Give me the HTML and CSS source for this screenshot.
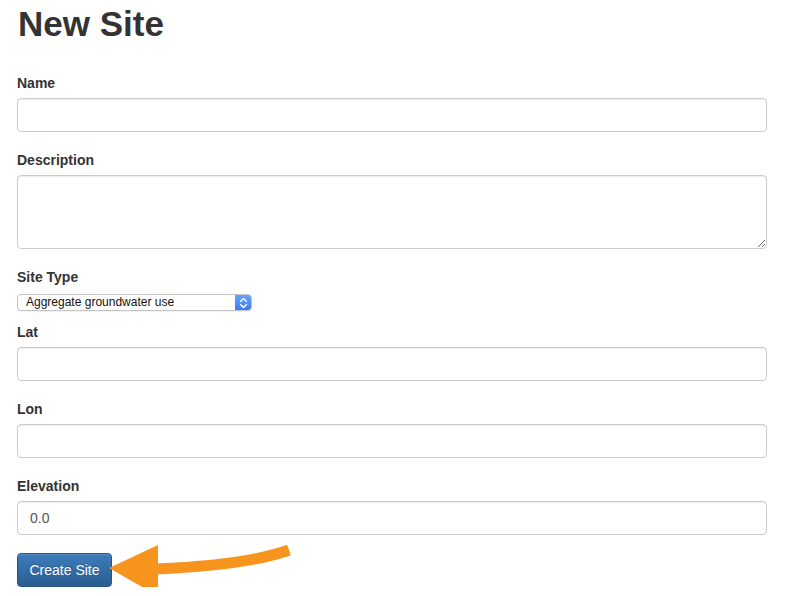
FILE: index.html
```html
<!DOCTYPE html>
<html>
<head>
<meta charset="utf-8">
<link rel="stylesheet" href="styles.css">
</head>
<body>
<div class="page">
  <h1 class="title">New Site</h1>
  <form class="form">
    <div class="group">
      <label class="label">Name</label>
      <input class="control" type="text">
    </div>
    <div class="group">
      <label class="label">Description</label>
      <textarea class="control area"></textarea>
    </div>
    <div class="group group-select">
      <label class="label">Site Type</label>
      <div class="select-box">
        <select class="select"><option>Aggregate groundwater use</option></select>
        <span class="stepper">
          <svg width="9" height="12" viewBox="0 0 9 12"><path d="M1.5 4.5 L4.5 1.5 L7.5 4.5 M1.5 7.5 L4.5 10.5 L7.5 7.5" fill="none" stroke="#fff" stroke-width="1.4" stroke-linecap="round" stroke-linejoin="round"/></svg>
        </span>
      </div>
    </div>
    <div class="group">
      <label class="label">Lat</label>
      <input class="control" type="text">
    </div>
    <div class="group">
      <label class="label">Lon</label>
      <input class="control" type="text">
    </div>
    <div class="group group-last">
      <label class="label">Elevation</label>
      <input class="control" type="text" value="0.0">
    </div>
    <div class="actions">
      <button class="btn" type="button">Create Site</button>
      <svg class="arrow" width="200" height="60" viewBox="0 0 200 60">
        <path d="M50 26 C 95 24, 150 19, 183 7" fill="none" stroke="#f7941e" stroke-width="11" stroke-linecap="butt"/>
        <polygon points="3,25 52,2 52,53" fill="#f7941e"/>
      </svg>
    </div>
  </form>
</div>
</body>
</html>
```
FILE: styles.css
```css
html, body {
  margin: 0;
  padding: 0;
  background: #fff;
}
.page {
  padding: 0 17px;
  width: 750px;
  font-family: "Liberation Sans", Arial, sans-serif;
  font-size: 14px;
  line-height: 20px;
  color: #333;
}
.title {
  font-size: 35px;
  font-weight: bold;
  line-height: 40px;
  margin: 4px 0 0 1px;
  color: #333;
}
.form {
  margin: 29px 0 0 0;
}
.group {
  display: flex;
  flex-direction: column;
  margin-bottom: 18px;
}
.group-select {
  margin-bottom: 11px;
}
.group-last {
  margin-bottom: 18px;
}
.label {
  font-weight: bold;
  font-size: 14px;
  line-height: 20px;
  margin-bottom: 5px;
  color: #333;
}
.control {
  box-sizing: border-box;
  width: 750px;
  height: 34px;
  padding: 6px 12px;
  border: 1px solid #ccc;
  border-radius: 4px;
  box-shadow: inset 0 1px 1px rgba(0,0,0,.075);
  font-family: "Liberation Sans", Arial, sans-serif;
  font-size: 14px;
  color: #555;
  background: #fff;
  margin: 0;
  outline: none;
}
.area {
  height: 74px;
  resize: vertical;
}
.select-box {
  display: flex;
  width: 235px;
  height: 17px;
  margin-top: 2px;
  box-sizing: border-box;
  border: 1px solid #c4c4c4;
  border-radius: 4px;
  background: #fff;
  box-shadow: 0 1px 1px rgba(0,0,0,.06);
  overflow: hidden;
}
.select {
  appearance: none;
  -webkit-appearance: none;
  flex: 1;
  border: 0;
  background: transparent;
  font-family: "Liberation Sans", Arial, sans-serif;
  font-size: 12px;
  line-height: 15px;
  height: 15px;
  padding: 0 0 0 8px;
  margin: 0;
  color: #111;
  outline: none;
}
.stepper {
  width: 16px;
  display: flex;
  align-items: center;
  justify-content: center;
  background: linear-gradient(#6aa3fa, #3b7cf2);
}
.actions {
  position: relative;
  display: flex;
}
.btn {
  box-sizing: border-box;
  width: 95px;
  height: 34px;
  padding: 6px 0;
  white-space: nowrap;
  font-family: "Liberation Sans", Arial, sans-serif;
  font-size: 14px;
  line-height: 20px;
  color: #fff;
  border: 1px solid #245580;
  border-radius: 4px;
  background: linear-gradient(#3c7dbd, #2a5d8f);
  box-shadow: inset 0 1px 0 rgba(255,255,255,.15), 0 1px 1px rgba(0,0,0,.075);
  text-shadow: 0 -1px 0 rgba(0,0,0,.2);
}
.arrow {
  position: absolute;
  left: 89px;
  top: -10px;
}
```
